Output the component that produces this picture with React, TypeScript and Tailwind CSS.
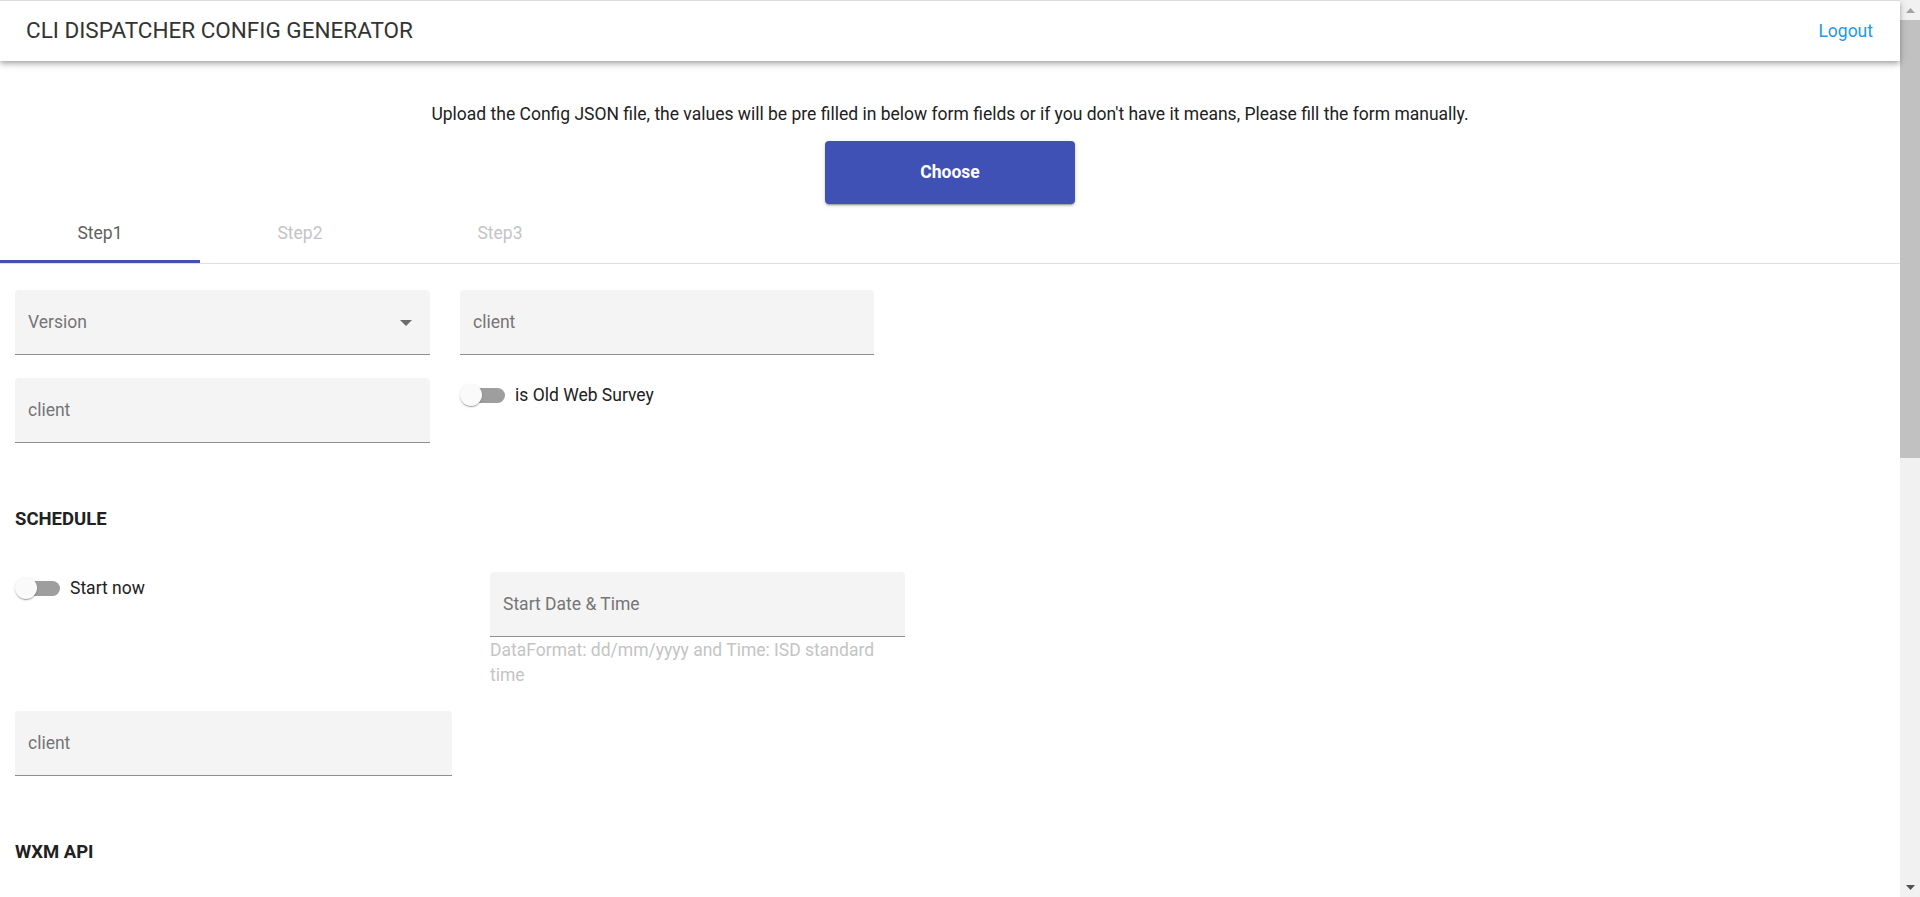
import clsx from "clsx";

type FieldProps = {
  label: string;
  select?: boolean;
  className?: string;
};

const FilledField = ({ label, select, className }: FieldProps) => (
  <div
    className={clsx(
      "flex h-[65px] shrink-0 items-center justify-between rounded-t-[4px] border-b border-[#8f8f8f] bg-[#f4f4f4] pl-[13px] pr-[18px] text-[17.5px] text-[#757575]",
      className
    )}
  >
    <span>{label}</span>
    {select && (
      <svg width="12" height="6" viewBox="0 0 12 6" className="mt-[2px]">
        <path d="M0 0h12L6 6z" fill="#6b6b6b" />
      </svg>
    )}
  </div>
);

const Toggle = ({ label }: { label: string }) => (
  <div className="flex items-center gap-[10px]">
    <span className="relative h-[22px] w-[45px] shrink-0">
      <span className="absolute left-[8px] top-[3.5px] h-[15px] w-[37px] rounded-full bg-[#9e9e9e]" />
      <span className="absolute left-0 top-0 size-[22px] rounded-full bg-[#fafafa] shadow-[0_2px_1px_-1px_rgba(0,0,0,0.2),0_1px_1px_0_rgba(0,0,0,0.14),0_1px_3px_0_rgba(0,0,0,0.12)]" />
    </span>
    <span className="text-[17.5px] text-[#212121]">{label}</span>
  </div>
);

const SectionTitle = ({ children }: { children: string }) => (
  <h3 className="mt-[62px] h-[28px] text-[18.5px] font-bold leading-[28px] text-[#212121]">
    {children}
  </h3>
);

// window scrollbar, drawn since the page is shot without one
const ScrollBar = () => (
  <aside className="flex w-[20px] shrink-0 flex-col bg-[#f1f1f1]">
    <div className="flex h-[20px] items-center justify-center">
      <svg width="9" height="5" viewBox="0 0 9 5">
        <path d="M0 5h9L4.5 0z" fill="#a3a3a3" />
      </svg>
    </div>
    <div className="h-[438px] bg-[#c1c1c1]" />
    <div className="flex-1" />
    <div className="flex h-[20px] items-center justify-center">
      <svg width="9" height="5" viewBox="0 0 9 5">
        <path d="M0 0h9L4.5 5z" fill="#505050" />
      </svg>
    </div>
  </aside>
);

const tabs = ["Step1", "Step2", "Step3"];

export default function App() {
  return (
    <div className="flex h-screen overflow-hidden bg-white font-[Roboto,sans-serif]">
      <div className="min-w-0 flex-1">
        <header className="relative z-10 flex h-[61px] items-center justify-between border-t border-[#dcdcdc] bg-white pl-[26px] pr-[27px] shadow-[0_2px_4px_-1px_rgba(0,0,0,0.2),0_4px_5px_0_rgba(0,0,0,0.14),0_1px_10px_0_rgba(0,0,0,0.12)]">
          <span className="text-[22.5px] text-[#333]">
            CLI DISPATCHER CONFIG GENERATOR
          </span>
          <a className="cursor-pointer text-[17.5px] text-[#2196f3]">Logout</a>
        </header>

        <section className="flex flex-col items-center">
          <p className="mt-[41px] text-[17.5px] leading-[24px] text-[#212121]">
            Upload the Config JSON file, the values will be pre filled in below
            form fields or if you don't have it means, Please fill the form
            manually.
          </p>
          <button className="mt-[15px] h-[63px] w-[250px] rounded-[4px] bg-[#3f51b5] text-[17.5px] font-bold text-white shadow-[0_3px_1px_-2px_rgba(0,0,0,0.2),0_2px_2px_0_rgba(0,0,0,0.14),0_1px_5px_0_rgba(0,0,0,0.12)]">
            Choose
          </button>
        </section>

        <nav className="flex border-b border-[#e0e0e0]">
          {tabs.map((tab, i) => (
            <div
              key={tab}
              className={clsx(
                "relative flex h-[59px] w-[200px] items-center justify-center text-[17.5px]",
                i === 0 ? "text-[#5f5f5f]" : "text-[#c4c4c4]"
              )}
            >
              {tab}
              {i === 0 && (
                <span className="absolute bottom-0 left-0 h-[3px] w-full bg-[#3f51b5]" />
              )}
            </div>
          ))}
        </nav>

        <main className="px-[15px] pt-[26px]">
          <div className="flex gap-[30px]">
            <FilledField label="Version" select className="w-[415px]" />
            <FilledField label="client" className="w-[414px]" />
          </div>

          <div className="mt-[23px] flex gap-[30px]">
            <FilledField label="client" className="w-[415px]" />
            <div className="mt-[4px]">
              <Toggle label="is Old Web Survey" />
            </div>
          </div>

          <SectionTitle>SCHEDULE</SectionTitle>

          <div className="mt-[39px] flex">
            <div className="mt-[3px] w-[475px]">
              <Toggle label="Start now" />
            </div>
            <div className="w-[415px]">
              <FilledField label="Start Date & Time" />
              <p className="mt-[1px] text-[17.5px] leading-[25px] text-[#c4c4c4]">
                DataFormat: dd/mm/yyyy and Time: ISD standard time
              </p>
            </div>
          </div>

          <FilledField label="client" className="mt-[23px] w-[437px]" />

          <SectionTitle>WXM API</SectionTitle>
        </main>
      </div>
      <ScrollBar />
    </div>
  );
}
